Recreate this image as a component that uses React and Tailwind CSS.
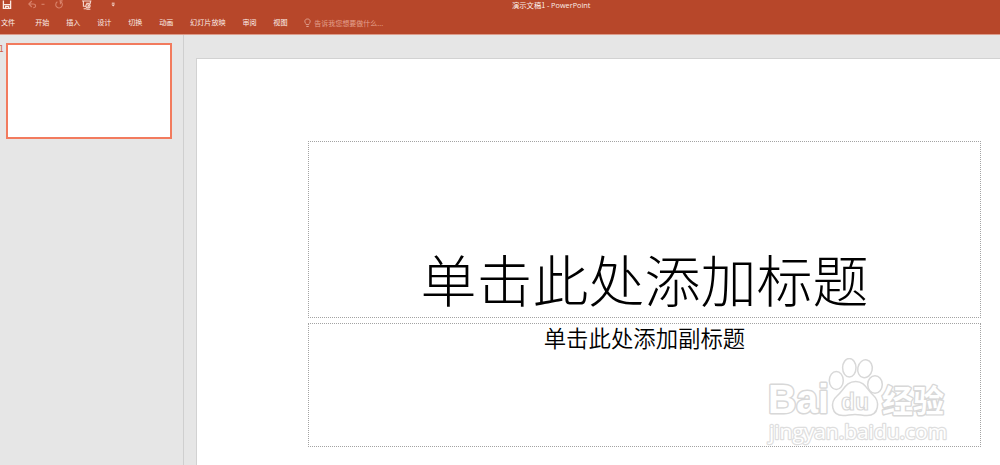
const tabs = ["开始", "插入", "设计", "切换", "动画", "幻灯片放映", "审阅", "视图"];

function QuickAccess() {
  return (
    <svg className="h-[12px] w-[124px]" viewBox="0 0 124 12" fill="none">
      <g stroke="#fbe9e3" strokeWidth="1.3">
        <path d="M3.4 .5V8.4H10.6V.5M3.4 4.6H10.6" />
        <path d="M5.6 8.2V6.4H8.6V8.2" />
      </g>
      <g stroke="#f6d8ce" strokeWidth="1.1">
        <path d="M82 1H91.4M83.4 1V6.2H86M86.2 3.2H90.4V1M83.6 8.8H86.5" />
        <circle cx="88" cy="5.8" r="2.1" />
        <path d="M87.5 4.8 89 5.8 87.5 6.8M86.4 9.2H90.4" />
      </g>
      <g stroke="#d9826a" strokeWidth="1.1">
        <path d="M31.8 1 28.8 4 31.8 7M29 4H33C36.4 4 36.4 7.8 33.2 7.8" />
        <path d="M41.5 4.3H44.5" />
        <path d="M61 2A3.3 3.3 0 1 1 57.4 1.8M59.4 .9H62.6M60.4 1V4.2" />
      </g>
      <path d="M111.8 3.2H114.6" stroke="#f6d8ce" />
      <path d="M111.4 4.5H115L113.2 6.6Z" fill="#f6d8ce" />
    </svg>
  );
}

function Ribbon() {
  return (
    <header className="flex h-[35px] shrink-0 flex-col border-b border-[#dc9c8b] bg-[#b7472a] text-[#fbeee9]">
      <div className="flex h-[12px]">
        <QuickAccess />
        <div className="ml-[388px] text-[7.3px] leading-[11px] whitespace-nowrap">
          演示文稿1 <span className="font-['Open_Sans',sans-serif]">- PowerPoint</span>
        </div>
      </div>
      <nav className="flex h-[21px] items-center pt-[1px] pl-[1px] text-[7.1px] leading-none whitespace-nowrap">
        <span className="mr-[20px]">文件</span>
        <div className="flex items-center gap-[16.8px]">
          {tabs.map((tab) => (
            <span key={tab}>{tab}</span>
          ))}
          <div className="flex items-center gap-[3px] text-[7px] text-[#e3a08e]">
            <svg className="h-[10px] w-[7px]" viewBox="0 0 7 10" fill="none" stroke="#e3a999" strokeWidth=".9">
              <path d="M2.2 6.6V5.9C.2 4.5.3 1 3.5 1S6.8 4.5 4.8 5.9V6.6ZM2.3 8.5H4.7" />
            </svg>
            <span>告诉我您想要做什么...</span>
          </div>
        </div>
      </nav>
    </header>
  );
}

function Watermark() {
  return (
    <svg className="absolute top-[299px] left-[569px] h-[92px] w-[184px]" viewBox="0 0 184 92" fill="#fff" stroke="#d8d8d8" strokeWidth="1.5">
      <g fontFamily="Liberation Sans, sans-serif" fontWeight="700" paintOrder="stroke" strokeLinejoin="round">
        <text x="2" y="55" fontSize="40" strokeWidth="3" textLength="61" lengthAdjust="spacingAndGlyphs">Bai</text>
        <text x="116" y="54" fontFamily="Noto Sans CJK SC, sans-serif" fontWeight="700" fontSize="31" strokeWidth="2.8" textLength="62" lengthAdjust="spacingAndGlyphs">经验</text>
      </g>
      <ellipse cx="70.3" cy="22.5" rx="7" ry="9" />
      <ellipse cx="83.3" cy="9.8" rx="6.7" ry="9.3" />
      <ellipse cx="99" cy="10.8" rx="7.2" ry="9" transform="rotate(12 99 10.8)" />
      <ellipse cx="109" cy="26.5" rx="7.3" ry="8.8" />
      <path d="M89.7 23.5C99 23.5 101 32 107 37C114 43 113.5 57.5 101 57.5C96 57.5 94 56.4 89 56.4C84 56.4 82 57.5 77 57.5C65 57.5 64 44 71 38C78 32 80 23.5 89.7 23.5Z" />
      <text x="75" y="51.5" fontFamily="Liberation Sans, sans-serif" fontWeight="700" fontSize="24" strokeWidth="1.2" textLength="28" lengthAdjust="spacingAndGlyphs">du</text>
      <text x="3" y="81" fontFamily="Open Sans, sans-serif" fontWeight="500" fontSize="20" stroke="#dedede" strokeWidth="2.4" strokeLinejoin="round" paintOrder="stroke" textLength="178" lengthAdjust="spacingAndGlyphs">jingyan.baidu.com</text>
    </svg>
  );
}

function SlideEditor() {
  return (
    <main className="flex flex-1 overflow-hidden pt-[23px] pl-[12px]">
      <div className="relative flex flex-1 flex-col gap-[5px] border-t border-l border-[#d2d2d2] bg-white pt-[82px] pr-[19px] pl-[111px]">
        <div className="flex h-[177px] items-end justify-center border border-dotted border-[#a3a3a3] pb-[11px] text-[56px] leading-[56px] font-light text-black">
          单击此处添加标题
        </div>
        <div className="flex h-[124px] items-start justify-center border border-dotted border-[#a3a3a3] pt-[1px] text-[22.4px] leading-[24px] font-[350] text-black">
          单击此处添加副标题
        </div>
        <Watermark />
      </div>
    </main>
  );
}

export default function App() {
  return (
    <div className="flex h-[465px] w-[1000px] flex-col overflow-hidden bg-[#e6e6e6] font-['Noto_Sans_CJK_SC',sans-serif]">
      <Ribbon />
      <div className="flex flex-1 overflow-hidden">
        <aside className="flex w-[184px] shrink-0 items-start border-r border-[#cfcfcf] pt-[8px]">
          <span className="-ml-[1px] w-[7px] text-[8.5px] leading-[10px] text-[#cf5b3f]">1</span>
          <div className="h-[96px] w-[166px] border-2 border-[#f27b5e] bg-white" />
        </aside>
        <SlideEditor />
      </div>
    </div>
  );
}
